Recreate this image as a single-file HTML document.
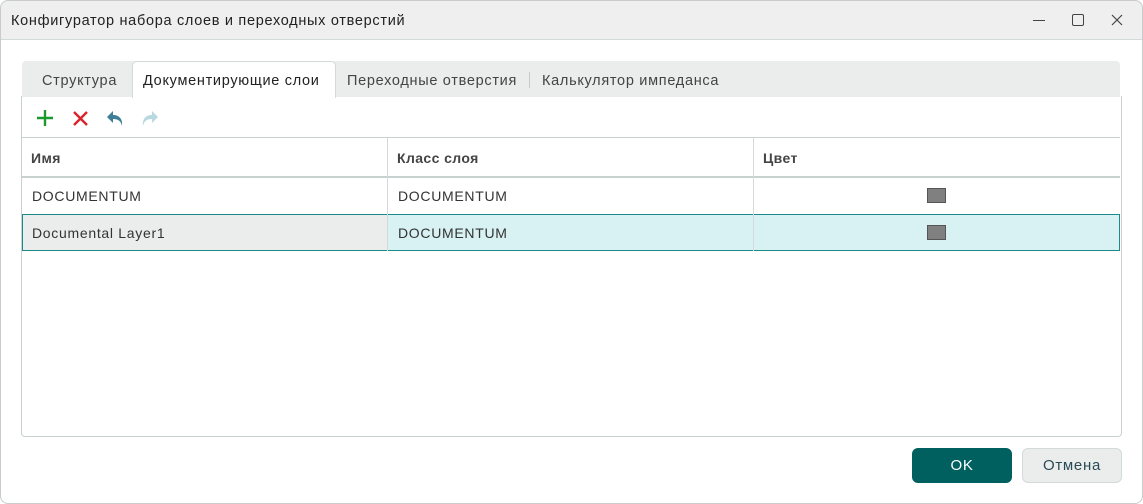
<!DOCTYPE html>
<html><head><meta charset="utf-8"><style>
*{box-sizing:border-box;margin:0;padding:0}
body{width:1143px;height:504px;background:#fff;font-family:"Liberation Sans",sans-serif;font-size:14px;color:#333;position:relative;overflow:hidden;letter-spacing:0.7px}
.win{position:absolute;left:0;top:0;width:1143px;height:504px;border-radius:8px;overflow:hidden;background:#fff}
.frame{position:absolute;left:0;top:0;width:1143px;height:504px;border:1px solid #c8cccc;border-radius:8px;pointer-events:none}
.title{position:absolute;left:0;top:0;width:100%;height:40px;background:#efefef;border-bottom:1px solid #d3dada}
.title span{position:absolute;left:11px;top:13px;font-size:14.5px;color:#222}
.abs{position:absolute}
.tabs{position:absolute;left:22px;top:61px;width:1098px;height:36px;background:#ebeded;border-radius:4px 4px 0 0}
.tab{position:absolute;top:12px;font-size:14.5px;color:#444}
.atab{position:absolute;left:132px;top:61px;width:204px;height:37px;background:#fff;border:1px solid #d3dada;border-bottom:none;border-radius:5px 5px 0 0}
.panel{position:absolute;left:21px;top:96px;width:1101px;height:341px;border:1px solid #c8d0d0;border-top:none;border-radius:0 0 4px 4px}
.hline{position:absolute;left:22px;width:1098px;background:#c8d0d0}
.vline{position:absolute;width:1px;background:#d3dada}
.cell{position:absolute;font-size:14px;color:#333}
.sw{position:absolute;left:927px;width:19px;height:15px;background:#808080;border:1px solid #555}
.btn{position:absolute;top:448px;height:35px;border-radius:6px;text-align:center;line-height:36px;font-size:15px}
</style></head><body>
<div class="win">
<div class="title"><span>Конфигуратор набора слоев и переходных отверстий</span>
<div class="abs" style="left:1033px;top:20px;width:12px;height:1px;background:#444"></div>
<div class="abs" style="left:1072px;top:14px;width:12px;height:12px;border:1px solid #444;border-radius:2px"></div>
<svg class="abs" style="left:1111px;top:14px" width="12" height="12"><path d="M1 1L11 11M11 1L1 11" stroke="#444" stroke-width="1.2"/></svg>
</div>
<div class="tabs">
<span class="tab" style="left:20px">Структура</span>
<span class="tab" style="left:325px">Переходные отверстия</span>
<div class="abs" style="left:507px;top:11px;width:1px;height:16px;background:#c8cccc"></div>
<span class="tab" style="left:520px">Калькулятор импеданса</span>
</div>
<div class="atab"><span class="tab" style="left:10px;top:11px;color:#222">Документирующие слои</span></div>
<div class="panel"></div>
<svg class="abs" style="left:36px;top:109px" width="18" height="18"><path d="M9 1V17M1 9H17" stroke="#1a9a2a" stroke-width="2.4"/></svg>
<svg class="abs" style="left:72px;top:110px" width="17" height="17"><path d="M2 2L15 15M15 2L2 15" stroke="#d8232a" stroke-width="2.4"/></svg>
<svg class="abs" style="left:105px;top:109px" width="20" height="20"><path d="M8 2L2 8L8 14V10C13 10 16 12 17 17C18 10 14 6 8 6Z" fill="#3f7f96"/></svg>
<svg class="abs" style="left:140px;top:109px" width="20" height="20"><path d="M12 2L18 8L12 14V10C7 10 4 12 3 17C2 10 6 6 12 6Z" fill="#b9d8e0"/></svg>
<div class="hline" style="top:137px;height:1px"></div>
<div class="hline" style="top:176px;height:2px"></div>
<div class="hline" style="top:214px;height:1px;background:#d3dada"></div>
<div class="abs" style="left:22px;top:214px;width:1098px;height:37px;background:#d8f1f2;border:1px solid #1a8a8a"></div>
<div class="abs" style="left:23px;top:215px;width:364px;height:35px;background:#ebeded"></div>
<div class="vline" style="left:387px;top:138px;height:113px"></div>
<div class="vline" style="left:753px;top:138px;height:113px"></div>
<div class="cell" style="left:31px;top:150px;font-weight:bold;color:#444;letter-spacing:0.4px">Имя</div>
<div class="cell" style="left:397px;top:150px;font-weight:bold;color:#444;letter-spacing:0.4px">Класс слоя</div>
<div class="cell" style="left:763px;top:150px;font-weight:bold;color:#444;letter-spacing:0.4px">Цвет</div>
<div class="cell" style="left:32px;top:188px">DOCUMENTUM</div>
<div class="cell" style="left:398px;top:188px">DOCUMENTUM</div>
<div class="sw" style="top:188px"></div>
<div class="cell" style="left:32px;top:225px">Documental Layer1</div>
<div class="cell" style="left:398px;top:225px">DOCUMENTUM</div>
<div class="sw" style="top:225px"></div>
<div class="btn" style="left:912px;width:100px;background:#005f5f;color:#fff">OK</div>
<div class="btn" style="left:1022px;width:100px;background:#ebeded;border:1px solid #d3dada;color:#2a4a55;line-height:34px">Отмена</div>
</div>
<div class="frame"></div>
</body></html>
